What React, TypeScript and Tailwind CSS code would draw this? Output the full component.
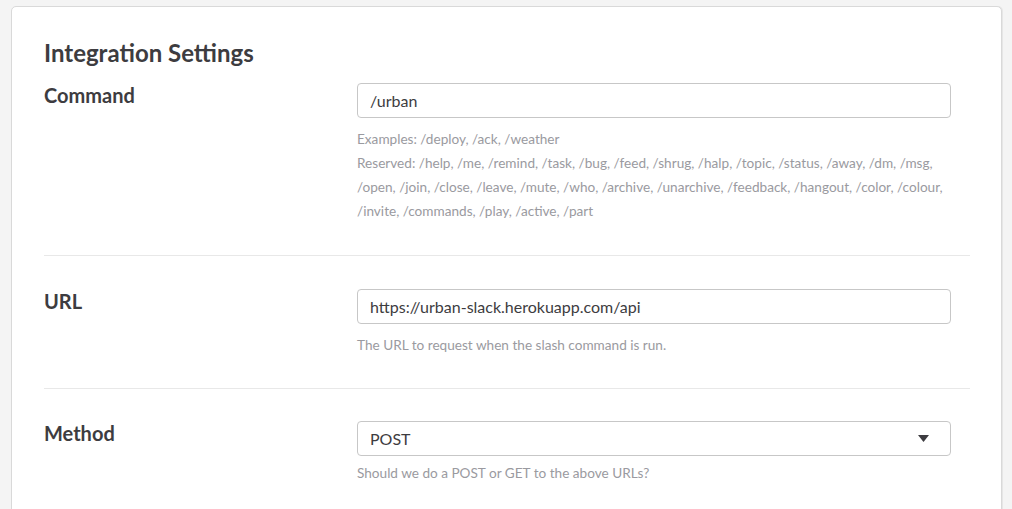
import React from 'react';

const reserved =
  'Reserved: /help, /me, /remind, /task, /bug, /feed, /shrug, /halp, /topic, /status, /away, /dm, /msg, /open, /join, /close, /leave, /mute, /who, /archive, /unarchive, /feedback, /hangout, /color, /colour, /invite, /commands, /play, /active, /part';

function Row({
  label,
  children,
  help,
  top = 'pt-[33px]',
  last,
  helpGap = 'mt-[9px]',
  bottom = 'pb-8',
}: {
  label: string;
  children: React.ReactNode;
  help: React.ReactNode;
  top?: string;
  last?: boolean;
  helpGap?: string;
  bottom?: string;
}) {
  return (
    <div className={`flex ${top} ${bottom} ${last ? '' : 'border-b border-[#e8e8e8]'}`}>
      <div className="w-[313px] shrink-0 text-[20px] leading-6 font-bold text-[#3d3c40]">{label}</div>
      <div className="w-[594px]">
        {children}
        <div className={`${helpGap} text-[13.6px] leading-6 text-[#9a9aa0]`}>{help}</div>
      </div>
    </div>
  );
}

export default function App() {
  const inputCls =
    'w-full h-[35px] px-3 rounded border border-[#c7c7c7] bg-white text-[16px] text-[#3d3c40] outline-none';

  return (
    <div className="min-h-screen bg-[#f4f4f4] pt-[6px] pl-[11px] pr-[10px] font-['Lato','Noto_Sans',sans-serif]">
      <div className="bg-white border border-[#d9d9d9] rounded-t-[5px] pt-[31px] pl-[32px] pr-[31px] shadow-[1px_0_0_#e6e6e6]">
        <h1 className="text-[24px] leading-[30px] font-bold text-[#3d3c40]">Integration Settings</h1>

        <Row
          top="pt-[15px]"
          label="Command"
          help={
            <>
              <div>Examples: /deploy, /ack, /weather</div>
              <div>{reserved}</div>
            </>
          }
        >
          <input className={inputCls} defaultValue="/urban" />
        </Row>

        <Row label="URL" bottom="pb-[31px]" help="The URL to request when the slash command is run.">
          <input className={inputCls} defaultValue="https://urban-slack.herokuapp.com/api" />
        </Row>

        <Row
          last
          top="pt-[32px]"
          label="Method"
          helpGap="mt-[5px]"
          help="Should we do a POST or GET to the above URLs?"
        >
          <div className={`${inputCls} flex items-center justify-between pr-[21px]`}>
            <span>POST</span>
            <svg width="11" height="7" viewBox="0 0 11 7">
              <path d="M0 0h11L5.5 7z" fill="#3d3c40" />
            </svg>
          </div>
        </Row>
      </div>
    </div>
  );
}
